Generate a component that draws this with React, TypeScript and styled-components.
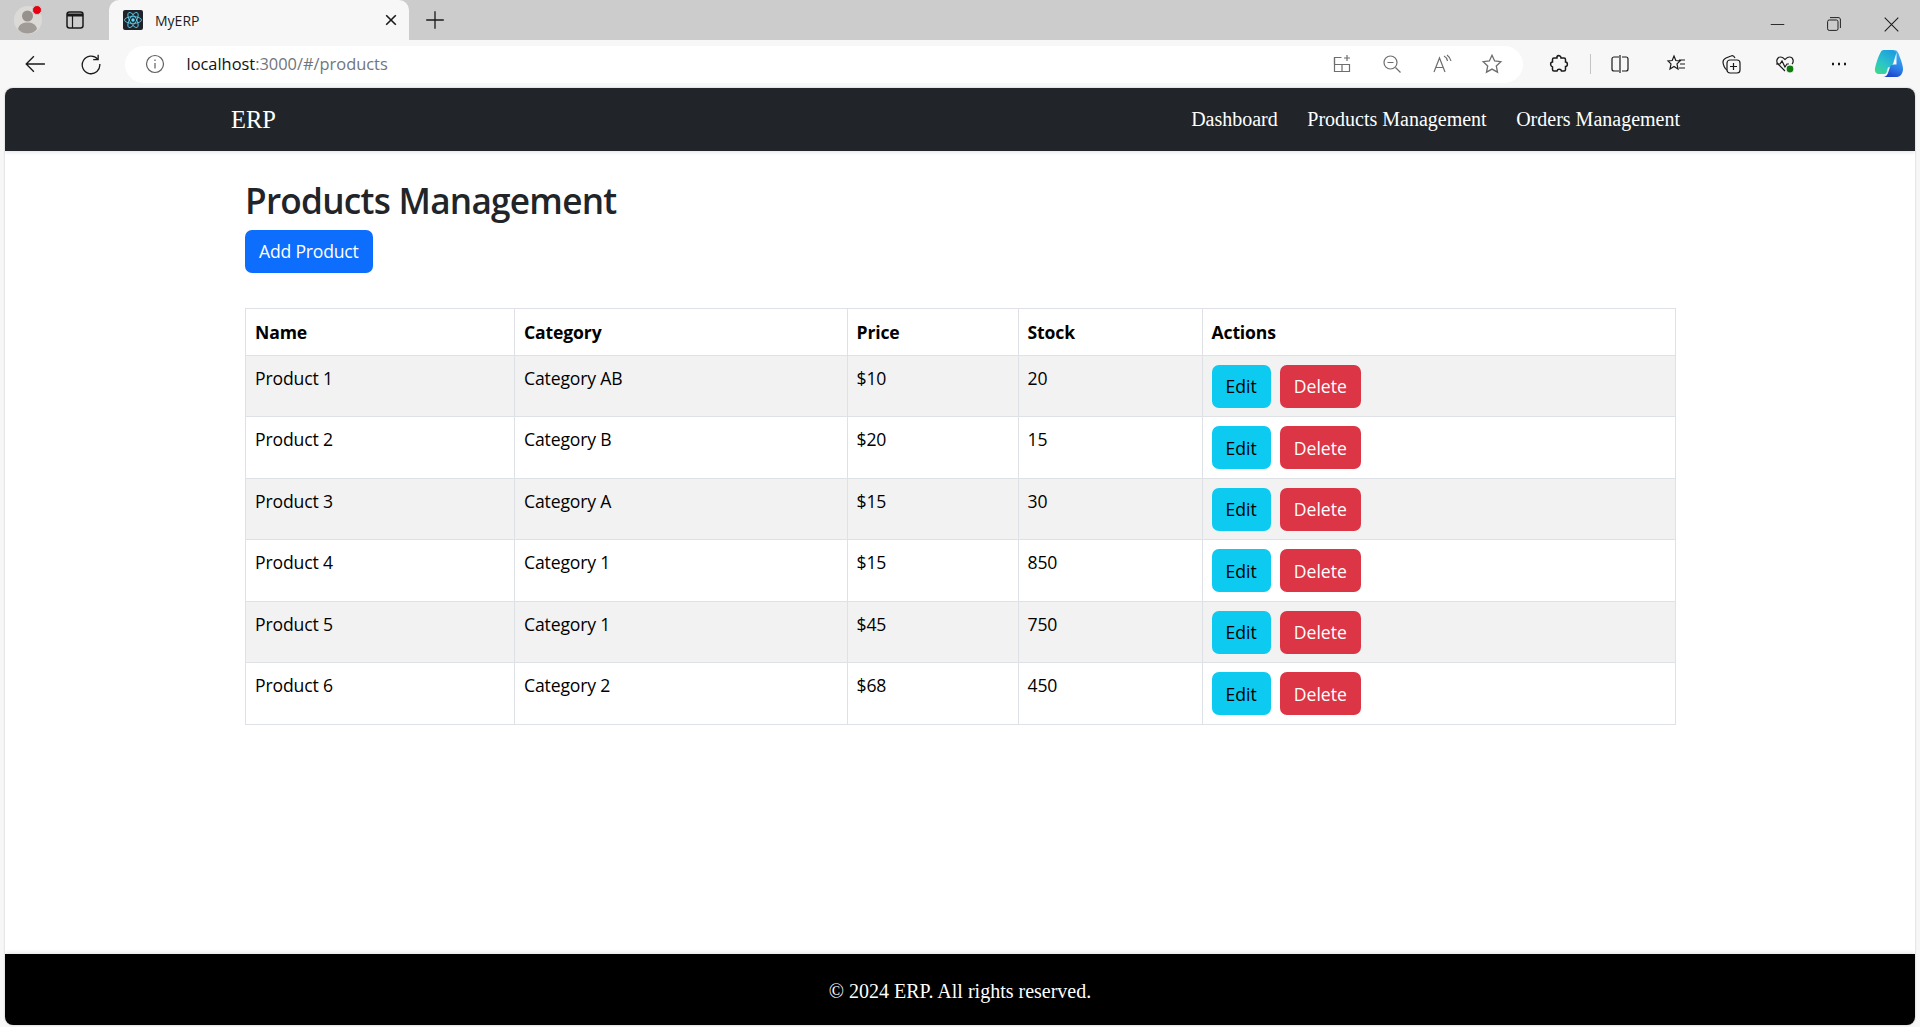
import React from 'react';
import styled, { createGlobalStyle } from 'styled-components';

const GlobalStyle = createGlobalStyle`
  html, body, #root {
    height: 100%;
    margin: 0;
  }
  body {
    background: #f7f7f7;
    overflow: hidden;
  }
`;

const Window = styled.div`
  display: flex;
  flex-direction: column;
  height: 1027px;
  font-family: 'Open Sans', 'Noto Sans', sans-serif;
`;

const TabStrip = styled.div`
  display: flex;
  align-items: center;
  height: 40px;
  flex: none;
  background: #cccccc;
`;

const StripSlot = styled.div<{ $w: number }>`
  display: flex;
  align-items: center;
  justify-content: center;
  flex: none;
  width: ${({ $w }) => $w}px;
  height: 40px;
`;

const Tab = styled.div`
  display: flex;
  align-items: center;
  flex: none;
  width: 300px;
  height: 40px;
  padding: 0 10px 0 14px;
  box-sizing: border-box;
  background: #f7f7f7;
  border-radius: 10px 10px 0 0;
`;

const TabTitle = styled.span`
  flex: 1;
  margin-left: 12px;
  font-size: 14px;
  color: #1c1c1c;
`;

const WindowControls = styled.div`
  display: flex;
  margin-left: auto;
  padding-top: 8px;
`;

const Toolbar = styled.div`
  display: flex;
  align-items: center;
  height: 48px;
  flex: none;
  padding-left: 7px;
  background: #f7f7f7;
`;

const ToolSlot = styled.div<{ $w: number }>`
  display: flex;
  align-items: center;
  justify-content: center;
  flex: none;
  width: ${({ $w }) => $w}px;
  height: 37px;
`;

const AddressBar = styled.div`
  display: flex;
  align-items: center;
  flex: none;
  width: 1398px;
  height: 37px;
  margin-left: 7px;
  padding-left: 20px;
  box-sizing: border-box;
  background: #ffffff;
  border-radius: 19px;
`;

const Url = styled.span`
  flex: 1;
  margin-left: 21.5px;
  padding-bottom: 2px;
  font-size: 16.4px;
  color: #70757a;

  b {
    font-weight: 400;
    color: #111111;
  }
`;

const Separator = styled.div`
  flex: none;
  width: 1px;
  height: 20px;
  background: #c4c4c4;
`;

const Page = styled.div`
  display: flex;
  flex-direction: column;
  flex: 1;
  margin: 0 5px 2px;
  background: #ffffff;
  border-radius: 8px;
  overflow: hidden;
  box-shadow: 0 0 2px rgba(0, 0, 0, 0.25);
`;

const NavBar = styled.nav`
  position: relative;
  display: flex;
  align-items: center;
  justify-content: space-between;
  flex: none;
  height: 63px;
  padding: 0 235px 0 226px;
  background: #212529;
  color: #ffffff;
  font-family: 'Liberation Serif', serif;
  box-shadow: 0 1px 4px rgba(0, 0, 0, 0.12);
`;

const Brand = styled.span`
  font-size: 24.5px;
`;

const NavLinks = styled.div`
  display: flex;
  gap: 29.5px;
`;

const NavLink = styled.a`
  font-size: 20px;
  color: #ffffff;
  text-decoration: none;
`;

const Main = styled.main`
  flex: 1;
  padding: 28px 240px 0;
`;

const Title = styled.h2`
  margin: 0 0 8.5px;
  font-size: 35.2px;
  line-height: 42.2px;
  font-weight: 600;
  letter-spacing: -0.75px;
  color: #212529;
`;

const Btn = styled.button<{ $tone: 'primary' | 'info' | 'danger' }>`
  height: 43px;
  padding: 0 14px;
  border: 0;
  border-radius: 7px;
  font-family: inherit;
  font-size: 17.6px;
  letter-spacing: ${({ $tone }) => ($tone === 'primary' ? '-0.2px' : '0')};
  background: ${({ $tone }) =>
    $tone === 'primary' ? '#0d6efd' : $tone === 'info' ? '#0dcaf0' : '#dc3545'};
  color: ${({ $tone }) => ($tone === 'info' ? '#000000' : '#ffffff')};
`;

const Table = styled.table`
  width: 1430px;
  margin-top: 35.5px;
  border-collapse: collapse;
  table-layout: fixed;
  font-size: 17.6px;
  letter-spacing: -0.15px;
  color: #000000;
`;

const Th = styled.th`
  height: 46.5px;
  padding: 0 9px;
  box-sizing: border-box;
  border: 1px solid #dee2e6;
  font-weight: 700;
  text-align: left;
`;

const Row = styled.tr<{ $striped: boolean }>`
  background: ${({ $striped }) => ($striped ? '#f2f2f2' : '#ffffff')};
`;

const Td = styled.td`
  height: 61.5px;
  padding: 9px 9px 8px;
  box-sizing: border-box;
  border: 1px solid #dee2e6;
  line-height: 26px;
  vertical-align: top;
`;

const Actions = styled.div`
  display: flex;
  gap: 9px;
`;

const Footer = styled.footer`
  position: relative;
  display: flex;
  align-items: center;
  justify-content: center;
  flex: none;
  height: 71px;
  padding-top: 3px;
  box-sizing: border-box;
  background: #000000;
  color: #ffffff;
  font-family: 'Liberation Serif', serif;
  font-size: 20px;
  box-shadow: 0 -1px 4px rgba(0, 0, 0, 0.12);
`;

const Glyph = styled.svg.attrs({ fill: 'none', viewBox: '0 0 20 20' })<{ $size?: number }>`
  display: block;
  flex: none;
  width: ${({ $size }) => $size ?? 20}px;
  height: ${({ $size }) => $size ?? 20}px;
  stroke: currentColor;
  stroke-width: 1.2;
  color: ${({ color }) => color ?? '#1a1a1a'};
`;

const products = [
  { name: 'Product 1', category: 'Category AB', price: '$10', stock: 20 },
  { name: 'Product 2', category: 'Category B', price: '$20', stock: 15 },
  { name: 'Product 3', category: 'Category A', price: '$15', stock: 30 },
  { name: 'Product 4', category: 'Category 1', price: '$15', stock: 850 },
  { name: 'Product 5', category: 'Category 1', price: '$45', stock: 750 },
  { name: 'Product 6', category: 'Category 2', price: '$68', stock: 450 }
];

const columnWidths = [269, 332.5, 171, 184, 473.5];

const Avatar = () => (
  <svg width="30" height="30" viewBox="0 0 30 30">
    <circle cx="15" cy="15" r="14" fill="#dcdad7" />
    <circle cx="14.5" cy="11" r="5.5" fill="#96918c" />
    <path d="M5 24c1-5 5-6.500 9.500-6.500S23 19 24 24c-2 3-6 4.500-9.500 4.500S7 27 5 24z" fill="#a09b96" />
    <circle cx="24" cy="5" r="4.500" fill="#e60012" stroke="#cccccc" strokeWidth="1" />
  </svg>
);

const ReactFavicon = () => (
  <svg width="20" height="20" viewBox="0 0 20 20">
    <rect width="20" height="20" rx="2" fill="#20232a" />
    <g fill="none" stroke="#61dafb" strokeWidth="0.8">
      <ellipse cx="10" cy="10" rx="8.500" ry="3.400" />
      <ellipse cx="10" cy="10" rx="8.500" ry="3.400" transform="rotate(60 10 10)" />
      <ellipse cx="10" cy="10" rx="8.500" ry="3.400" transform="rotate(120 10 10)" />
    </g>
    <circle cx="10" cy="10" r="1.700" fill="#61dafb" />
  </svg>
);

const CopilotLogo = () => (
  <svg width="32" height="32" viewBox="0 0 32 32">
    <defs>
      <linearGradient id="copA" x1="0.7" y1="0" x2="0.1" y2="1">
        <stop offset="0" stopColor="#1d9fe0" />
        <stop offset="0.55" stopColor="#2cc4c8" />
        <stop offset="1" stopColor="#3ed98a" />
      </linearGradient>
      <linearGradient id="copB" x1="0.6" y1="0" x2="0.3" y2="1">
        <stop offset="0" stopColor="#38b6f0" />
        <stop offset="0.6" stopColor="#2b7fe8" />
        <stop offset="1" stopColor="#1b3fc8" />
      </linearGradient>
    </defs>
    <path d="M11 2h9c2 0 3 1 3.500 2.500L20 16c-1 2.500-3 3.500-5 3.500l-1.500 5c-.5 1-1.500 1.500-2.500 1.500H6c-3 0-4.500-2.500-4-5.500C3 15 5.500 8.500 7 5.500 8 3 9 2 11 2z" fill="url(#copA)" />
    <path d="M21 2c2 0 3.500 1 4.500 3.500 1.500 4 4.500 11 4.500 15.500 0 4-2.500 8-6 8H10c2.500 0 4-1.500 5-4l2-6c.5-1.500 2-2.500 4-2.500h2.500L23.500 6c-.5-2-1-3.500-2.500-4z" fill="url(#copB)" />
  </svg>
);

const App = () => (
  <Window>
    <GlobalStyle />
    <TabStrip>
      <StripSlot $w={56}>
        <Avatar />
      </StripSlot>
      <StripSlot $w={38}>
        <Glyph $size={20}>
          <rect x="2" y="2" width="16" height="16" rx="2.500" strokeWidth="1.500" />
          <path d="M2 5h16" strokeWidth="3" />
          <path d="M7.500 6v12" strokeWidth="1.200" />
        </Glyph>
      </StripSlot>
      <StripSlot $w={15} />
      <Tab>
        <ReactFavicon />
        <TabTitle>MyERP</TabTitle>
        <Glyph $size={16}>
          <path d="M4 4l12 12M16 4L4 16" strokeWidth="2" />
        </Glyph>
      </Tab>
      <StripSlot $w={52}>
        <Glyph $size={22}>
          <path d="M10 2v16M2 10h16" strokeWidth="1.200" />
        </Glyph>
      </StripSlot>
      <WindowControls>
        <StripSlot $w={56}>
          <Glyph $size={15}>
            <path d="M1 10h18" />
          </Glyph>
        </StripSlot>
        <StripSlot $w={57}>
          <Glyph $size={16}>
            <rect x="2" y="5" width="13" height="13" rx="2" />
            <path d="M5 2h10c2.500 0 3 1 3 3v10" />
          </Glyph>
        </StripSlot>
        <StripSlot $w={58}>
          <Glyph $size={17}>
            <path d="M2 2l16 16M18 2L2 18" />
          </Glyph>
        </StripSlot>
      </WindowControls>
    </TabStrip>

    <Toolbar>
      <ToolSlot $w={56}>
        <Glyph $size={22}>
          <path d="M19 10H2M9 3l-7 7 7 7" />
        </Glyph>
      </ToolSlot>
      <ToolSlot $w={55}>
        <Glyph $size={22}>
          <path d="M16 5.500A8 8 0 1 0 18 10" />
          <path d="M16.500 1.500v4.500H12" />
        </Glyph>
      </ToolSlot>
      <AddressBar>
        <Glyph $size={20} color="#5f5f5f">
          <circle cx="10" cy="10" r="8.500" />
          <path d="M10 9v5.500M10 5.500v1.500" />
        </Glyph>
        <Url>
          <b>localhost</b>:3000/#/products
        </Url>
        <ToolSlot $w={50}>
          <Glyph color="#6e6e6e">
            <path d="M9.500 3.500H2.500v14h15v-7h-15M10 10.500v7" />
            <path d="M2.500 10.500V3.500M15 1v6M12 4h6" />
          </Glyph>
        </ToolSlot>
        <ToolSlot $w={50}>
          <Glyph color="#6e6e6e">
            <circle cx="8.500" cy="8.500" r="6.500" />
            <path d="M13.500 13.500l5 5M5.500 8.500h6" />
          </Glyph>
        </ToolSlot>
        <ToolSlot $w={50}>
          <Glyph color="#6e6e6e">
            <path d="M2 18L7.500 4 13 18M4 13.500h7" />
            <path d="M12 2c2 1 3 2.500 3.500 5M15 1c2 1.500 3.500 3.500 4 6" />
          </Glyph>
        </ToolSlot>
        <ToolSlot $w={50}>
          <Glyph $size={22} color="#6e6e6e">
            <path d="M10 2l2.400 5.200 5.600.7-4.100 3.900 1.100 5.600-5-2.800-5 2.800 1.100-5.600L2 7.900l5.600-.7z" />
          </Glyph>
        </ToolSlot>
        <ToolSlot $w={6} />
      </AddressBar>
      <ToolSlot $w={26} />
      <Glyph $size={20}>
        <path d="M8 2.500c1-1.500 4-1 4 1.500h3c1 0 1.500.5 1.500 1.500v2.500c2.500 0 2.500 4.500 0 4.500v3c0 1-.5 1.500-1.500 1.500h-2.500c-.5-2.500-4-2.500-4.500 0H5c-1 0-1.500-.5-1.500-1.500v-2.500C1 12 1 8 3.500 8V5.500C3.500 4.500 4 4 5 4h3z" strokeWidth="1.500" />
      </Glyph>
      <ToolSlot $w={21} />
      <Separator />
      <ToolSlot $w={19} />
      <Glyph $size={20}>
        <path d="M9 3H4c-1 0-2 1-2 2v10c0 1 1 2 2 2h5M12 3h4c1 0 2 1 2 2v10c0 1-1 2-2 2h-4M10 1v18" />
      </Glyph>
      <ToolSlot $w={36} />
      <Glyph $size={20}>
        <path d="M8 2l1.800 4.500 4.200.4-3 3 1 5.100-4-2.500L4 15l1-5.100-3-3 4.200-.4zM13 6h6M14 10h5M13 14h6" />
      </Glyph>
      <ToolSlot $w={35} />
      <Glyph $size={20}>
        <path d="M6 16c-2-1-4-5-4-8 0-2 1-3 3-4l5-2c2-1 3 0 4 2" />
        <rect x="6" y="6" width="13" height="13" rx="3" />
        <path d="M12.500 9v7M9 12.500h7" />
      </Glyph>
      <ToolSlot $w={34} />
      <Glyph $size={20}>
        <path d="M10 17L3 10C1 8 1.500 3 5.500 3 8 3 9 4.500 10 5.500 11 4.500 12 3 14.500 3c4 0 4.500 5 2.500 7" />
        <path d="M1 10h4l2-3 3 6 2-3h2" />
        <circle cx="15" cy="15" r="4" fill="#107c10" stroke="#f7f7f7" />
      </Glyph>
      <ToolSlot $w={34} />
      <Glyph $size={20}>
        <path d="M3 10h2M9 10h2M15 10h2" strokeWidth="2.600" />
      </Glyph>
      <ToolSlot $w={24} />
      <CopilotLogo />
    </Toolbar>

    <Page>
      <NavBar>
        <Brand>ERP</Brand>
        <NavLinks>
          <NavLink>Dashboard</NavLink>
          <NavLink>Products Management</NavLink>
          <NavLink>Orders Management</NavLink>
        </NavLinks>
      </NavBar>
      <Main>
        <Title>Products Management</Title>
        <Btn $tone="primary">Add Product</Btn>
        <Table>
          <colgroup>
            {columnWidths.map((w) => (
              <col key={w} width={w} />
            ))}
          </colgroup>
          <thead>
            <tr>
              <Th>Name</Th>
              <Th>Category</Th>
              <Th>Price</Th>
              <Th>Stock</Th>
              <Th>Actions</Th>
            </tr>
          </thead>
          <tbody>
            {products.map((p, i) => (
              <Row key={p.name} $striped={i % 2 === 0}>
                <Td>{p.name}</Td>
                <Td>{p.category}</Td>
                <Td>{p.price}</Td>
                <Td>{p.stock}</Td>
                <Td>
                  <Actions>
                    <Btn $tone="info">Edit</Btn>
                    <Btn $tone="danger">Delete</Btn>
                  </Actions>
                </Td>
              </Row>
            ))}
          </tbody>
        </Table>
      </Main>
      <Footer>© 2024 ERP. All rights reserved.</Footer>
    </Page>
  </Window>
);

export default App;
